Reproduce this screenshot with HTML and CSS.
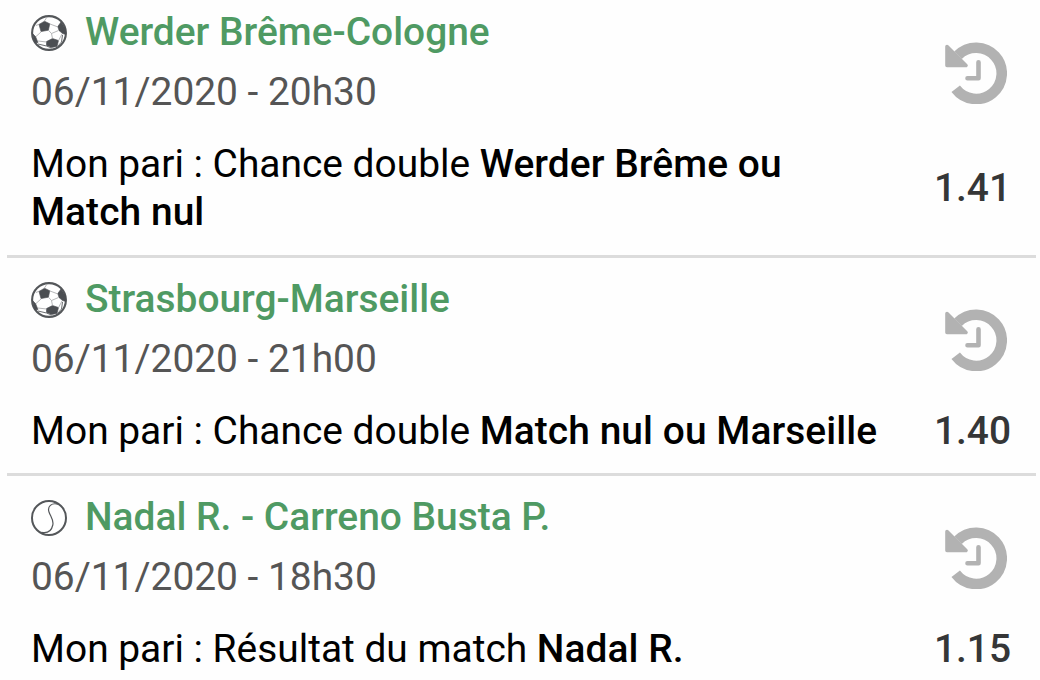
FILE: index.html
```html
<!DOCTYPE html>
<html lang="fr">
<head>
<meta charset="utf-8">
<title>Mes paris</title>
<link rel="stylesheet" href="styles.css">
</head>
<body>
<svg class="defs" width="0" height="0" aria-hidden="true">
  <symbol id="football" viewBox="0 0 36 36">
    <circle cx="18" cy="18" r="16.900" fill="#fff" stroke="#54575a" stroke-width="2.100"/>
    <g fill="#4b4e52" stroke="#4b4e52" stroke-width=".6" stroke-linejoin="round">
      <path d="M8 9.400 13.500 6.200 18.800 8.800 17.400 15.200 10 16.600z"/>
      <path d="M26.800 11.500 30 7 34.500 14 35 19.500 31.500 18.500 28 15.500z"/>
      <path d="M15.500 26.500 21.500 23.500 27.500 25.500 26 31.500 20.500 32.500 15.500 30.500z"/>
      <path d="M1.500 18.500 4.500 21.500 7 27.500 4 28z"/>
    </g>
    <path d="M13.600 5.800 16 2M19 9 27 12M17.400 15.200 20.500 18.500 21.500 23.500M20.500 18.500 27.500 15.500M10.200 16.800 5 21.500M8.200 9.200 5 10.500M31 19 27.300 26M15.500 27 7 26" fill="none" stroke="#a3a5a7" stroke-width=".8"/>
    <path d="M20.500 33 15.500 31 7 29M31.500 20 30.500 27 26.500 31.500" fill="none" stroke="#6a6d70" stroke-width="1"/>
  </symbol>
  <symbol id="tennis" viewBox="0 0 36 36">
    <circle cx="18" cy="18" r="17" fill="#fff" stroke="#54575a" stroke-width="2"/>
    <path d="M27 4.200C20.500 2.500 16.200 6.500 18 12C19.500 16.500 23 20 21.800 25C20.500 31 16.500 33.500 10.500 32.300" fill="none" stroke="#54575a" stroke-width="1.200"/>
  </symbol>
  <symbol id="pending" viewBox="0 0 62 62">
    <path d="M13 13.300A25.600 25.600 0 1 1 10.700 46.800" fill="none" stroke="#b2b2b2" stroke-width="10.600"/>
    <path d="M2 4.500 21 23.500H2z" fill="#b2b2b2" stroke="#b2b2b2" stroke-width="3.600" stroke-linejoin="round"/>
    <path d="M33.500 20.200V36.200H22.500" fill="none" stroke="#b2b2b2" stroke-width="4.600" stroke-linecap="round" stroke-linejoin="round"/>
  </symbol>
</svg>
<main class="bets">
  <article class="bet">
    <div class="info">
      <h2 class="event"><svg class="sport"><use href="#football"/></svg><span>Werder Brême-Cologne</span></h2>
      <p class="date">06/11/2020 - 20h30</p>
      <p class="pick">Mon pari : Chance double <b>Werder Brême ou</b> <b>Match&nbsp;nul</b></p>
    </div>
    <div class="result">
      <svg class="status"><use href="#pending"/></svg>
      <div class="odds">1.41</div>
    </div>
  </article>
  <article class="bet">
    <div class="info">
      <h2 class="event"><svg class="sport"><use href="#football"/></svg><span>Strasbourg-Marseille</span></h2>
      <p class="date">06/11/2020 - 21h00</p>
      <p class="pick">Mon pari : Chance double <b>Match nul ou Marseille</b></p>
    </div>
    <div class="result">
      <svg class="status"><use href="#pending"/></svg>
      <div class="odds">1.40</div>
    </div>
  </article>
  <article class="bet">
    <div class="info">
      <h2 class="event"><svg class="sport"><use href="#tennis"/></svg><span>Nadal R. - Carreno Busta P.</span></h2>
      <p class="date">06/11/2020 - 18h30</p>
      <p class="pick">Mon pari : Résultat du match <b>Nadal R.</b></p>
    </div>
    <div class="result">
      <svg class="status"><use href="#pending"/></svg>
      <div class="odds">1.15</div>
    </div>
  </article>
</main>
</body>
</html>
```
FILE: styles.css
```css
* { box-sizing: border-box; }
body {
  margin: 0;
  height: 680px;
  overflow: hidden;
  background: #fefefe;
  font-family: Roboto, "Liberation Sans", sans-serif;
  font-size: 38.9px;
  line-height: 48px;
  color: #000;
}
.defs { display: block; }
.bets {
  margin: -9px 4px 0 7px;
}
.bet {
  display: flex;
  justify-content: space-between;
  padding: 17px 29px 18.5px 24px;
  border-bottom: 3px solid #dcdcdc;
}
.bet:last-child { border-bottom: 0; }
.info { width: 860px; }
.event {
  display: flex;
  align-items: center;
  gap: 18px;
  margin: 0;
  font-size: 38.9px;
  font-weight: 500;
  color: #4f9a63;
}
.sport {
  width: 36px;
  height: 36px;
  transform: translateY(1px);
}
.date {
  margin: 12px 0 0;
  color: #555;
}
.pick { margin: 24px 0 0; }
.pick b {
  font-weight: 500;
  letter-spacing: 0.07px;
}
.result {
  display: flex;
  flex-direction: column;
  align-items: flex-end;
  padding-top: 34px;
}
.status {
  width: 62px;
  height: 62px;
}
.odds {
  flex: 1;
  display: flex;
  align-items: center;
  padding-top: 36px;
  margin-right: -4px;
  font-weight: 500;
  color: #353637;
}
```
